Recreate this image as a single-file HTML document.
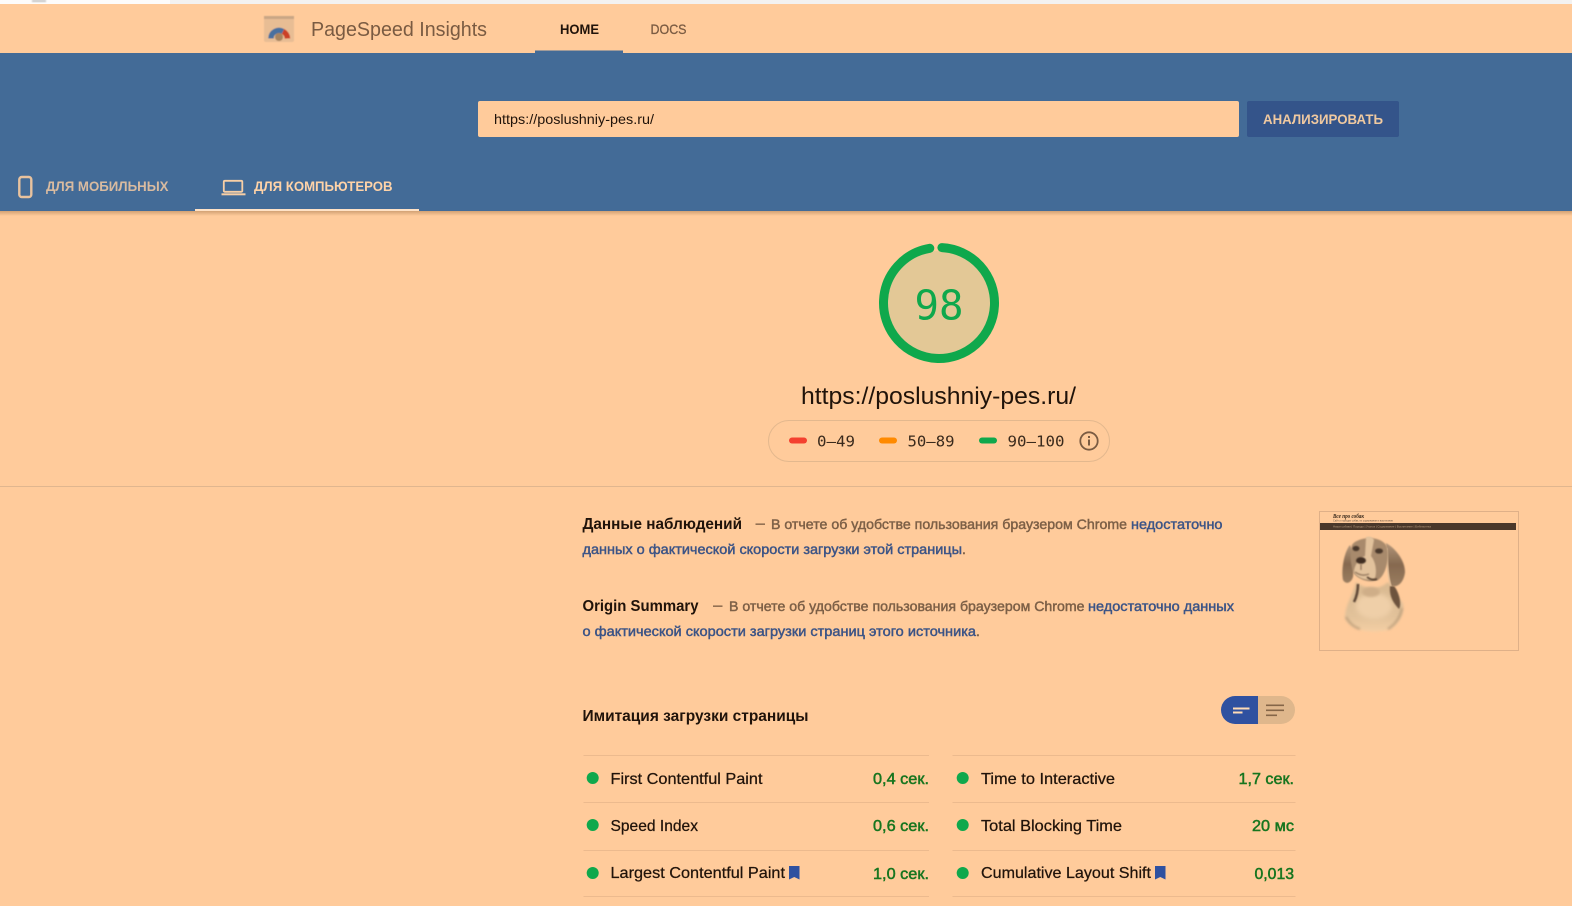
<!DOCTYPE html>
<html lang="ru">
<head>
<meta charset="utf-8">
<title>PageSpeed Insights</title>
<style>
html,body{margin:0;padding:0;background:#ffcb9b;width:1572px;height:906px;overflow:hidden}
svg{display:block}
text{font-family:"Liberation Sans",sans-serif;white-space:pre}
.b{font-weight:700}
.m{font-family:"DejaVu Sans Mono","Liberation Mono",monospace}
</style>
</head>
<body>
<svg xmlns="http://www.w3.org/2000/svg" width="1572" height="906" viewBox="0 0 1572 906">
<defs>
<filter id="s1" x="-50%" y="-50%" width="200%" height="200%"><feGaussianBlur stdDeviation="1.200"/></filter>
<filter id="s2" x="-50%" y="-50%" width="200%" height="200%"><feGaussianBlur stdDeviation="2.500"/></filter>
<filter id="s05" x="-50%" y="-50%" width="200%" height="200%"><feGaussianBlur stdDeviation="0.700"/></filter>
<filter id="sl" x="-20%" y="-20%" width="140%" height="140%"><feGaussianBlur stdDeviation="0.450"/></filter>
<linearGradient id="sh" x1="0" y1="0" x2="0" y2="1"><stop offset="0" stop-color="#d2a274"/><stop offset="1" stop-color="#ffcb9b"/></linearGradient>
<linearGradient id="ear" x1="0" y1="0" x2="0" y2="1"><stop offset="0" stop-color="#b2967a"/><stop offset=".5" stop-color="#86694f"/><stop offset="1" stop-color="#9a7d60"/></linearGradient>
<linearGradient id="chest" x1="0" y1="0" x2="0" y2="1"><stop offset="0" stop-color="#d8b890"/><stop offset=".7" stop-color="#e2c29a"/><stop offset="1" stop-color="#f4cfa4"/></linearGradient>
</defs>

<rect width="1572" height="906" fill="#ffcb9b"/>
<!-- top strip -->
<rect width="1572" height="4" fill="#f3f2f1"/>
<rect width="170" height="4" fill="#fdfcfb"/>
<rect x="32" y="0" width="14" height="2" fill="#c4c4c4" filter="url(#s05)"/>

<!-- header -->
<g filter="url(#sl)">
<rect x="264" y="16" width="30" height="26" rx="2" fill="#e8bd94"/>
<rect x="264" y="16" width="30" height="3" fill="#c9a685"/>
<path d="M271 38.500A8 8 0 0 1 283 31.500" fill="none" stroke="#48709f" stroke-width="5.500"/>
<path d="M283 31.500A8 8 0 0 1 287.500 38.500" fill="none" stroke="#cb3f28" stroke-width="5.500"/>
<circle cx="279" cy="37" r="4" fill="#a8845f"/>
</g>
<text x="311" y="36" font-size="20" fill="#7a5b42" textLength="176" lengthAdjust="spacingAndGlyphs">PageSpeed Insights</text>
<text x="560" y="34" font-size="14" class="b" fill="#20130a" textLength="39" lengthAdjust="spacingAndGlyphs">HOME</text>
<text x="650.500" y="34" font-size="14" fill="#7a5b42" stroke="#7a5b42" stroke-width="0.300" textLength="36" lengthAdjust="spacingAndGlyphs">DOCS</text>

<!-- blue band -->
<rect x="0" y="53" width="1572" height="158" fill="#436b97"/>
<rect x="0" y="211" width="1572" height="5" fill="url(#sh)"/>
<rect x="535" y="50.500" width="88" height="2.500" fill="#436b97"/>

<rect x="478" y="101" width="761" height="36" rx="2" fill="#ffcb9b"/>
<text x="494" y="124" font-size="14" fill="#20130a" textLength="160" lengthAdjust="spacingAndGlyphs">https://poslushniy-pes.ru/</text>
<rect x="1247" y="101" width="152" height="36" rx="2" fill="#34548a"/>
<text x="1263" y="124" font-size="14" class="b" fill="#f0c9a0" textLength="120" lengthAdjust="spacingAndGlyphs">АНАЛИЗИРОВАТЬ</text>

<!-- tabs -->
<rect x="19.300" y="177" width="12" height="20" rx="2.500" fill="none" stroke="#e8c29e" stroke-width="2.400"/>
<text x="46" y="191" font-size="14" class="b" fill="#d9bba0" textLength="122.500" lengthAdjust="spacingAndGlyphs">ДЛЯ МОБИЛЬНЫХ</text>
<rect x="223.800" y="180.800" width="18.500" height="11" rx="1" fill="none" stroke="#f8cfa6" stroke-width="1.800"/>
<rect x="221.500" y="193.300" width="24" height="2" fill="#f8cfa6"/>
<text x="254" y="191" font-size="14" class="b" fill="#ffd3a8" textLength="138.500" lengthAdjust="spacingAndGlyphs">ДЛЯ КОМПЬЮТЕРОВ</text>
<rect x="195" y="209" width="224" height="2" fill="#ffe2c6"/>

<!-- gauge -->
<circle cx="939" cy="303" r="52" fill="#e3c896"/>
<circle cx="939" cy="303" r="55.500" fill="none" stroke="#0fa84c" stroke-width="9" stroke-linecap="round" stroke-dasharray="336.200 400" transform="rotate(-87 939 303)"/>
<text x="914.500" y="319.500" class="m" font-size="41" fill="#0fa84c" textLength="49" lengthAdjust="spacingAndGlyphs">98</text>
<text x="801" y="404" font-size="24" fill="#20130a" textLength="275" lengthAdjust="spacingAndGlyphs">https://poslushniy-pes.ru/</text>

<!-- legend -->
<rect x="768.500" y="420.500" width="341" height="41" rx="20.500" fill="none" stroke="#e3b88e"/>
<rect x="789" y="437.500" width="18" height="6" rx="3" fill="#f4402f"/>
<text x="817" y="446.500" class="m" font-size="15" fill="#3a2a1c" textLength="38" lengthAdjust="spacingAndGlyphs">0–49</text>
<rect x="879" y="437.500" width="18" height="6" rx="3" fill="#ff8a00"/>
<text x="907.500" y="446.500" class="m" font-size="15" fill="#3a2a1c" textLength="47" lengthAdjust="spacingAndGlyphs">50–89</text>
<rect x="979" y="437.500" width="18" height="6" rx="3" fill="#0fa84c"/>
<text x="1007.500" y="446.500" class="m" font-size="15" fill="#3a2a1c" textLength="57" lengthAdjust="spacingAndGlyphs">90–100</text>
<circle cx="1089" cy="441" r="8.700" fill="none" stroke="#7a5b42" stroke-width="1.800"/>
<rect x="1088" y="439.500" width="2" height="6" fill="#7a5b42"/>
<rect x="1088" y="436" width="2" height="2" fill="#7a5b42"/>

<rect x="0" y="486" width="1572" height="1" fill="#e0b68f"/>

<!-- field data -->
<text x="582.500" y="529" font-size="16" class="b" fill="#20130a" textLength="159.500" lengthAdjust="spacingAndGlyphs">Данные наблюдений</text>
<rect x="755.500" y="523.500" width="9.500" height="1.300" fill="#7a5b42"/>
<g font-size="14" fill="#7d6047" stroke="#7d6047" stroke-width="0.450">
<text x="771" y="529" textLength="356" lengthAdjust="spacingAndGlyphs">В отчете об удобстве пользования браузером Chrome</text>
<text x="729" y="611" textLength="355.500" lengthAdjust="spacingAndGlyphs">В отчете об удобстве пользования браузером Chrome</text>
<text x="962" y="554">.</text>
<text x="976" y="636">.</text>
</g>
<g font-size="14" fill="#3c5486" stroke="#3c5486" stroke-width="0.450">
<text x="1131" y="529" textLength="91.500" lengthAdjust="spacingAndGlyphs">недостаточно</text>
<text x="582.500" y="554" textLength="379.500" lengthAdjust="spacingAndGlyphs">данных о фактической скорости загрузки этой страницы</text>
<text x="1088" y="611" textLength="146" lengthAdjust="spacingAndGlyphs">недостаточно данных</text>
<text x="582.500" y="636" textLength="393.500" lengthAdjust="spacingAndGlyphs">о фактической скорости загрузки страниц этого источника</text>
</g>
<text x="582.500" y="611" font-size="16" class="b" fill="#20130a" textLength="116" lengthAdjust="spacingAndGlyphs">Origin Summary</text>
<rect x="713" y="605.500" width="9.500" height="1.300" fill="#7a5b42"/>

<!-- thumbnail -->
<rect x="1319.500" y="511.500" width="199" height="139" fill="none" stroke="#dfb088"/>
<rect x="1320" y="523" width="196" height="7" fill="#4a382b"/>
<text x="1333" y="518" font-size="6.500" class="b" font-style="italic" style="font-family:'Liberation Serif',serif" fill="#3a2a1c" textLength="31" lengthAdjust="spacingAndGlyphs">Все про собак</text>
<text x="1333" y="521.500" font-size="2.500" fill="#6a5442" textLength="60" lengthAdjust="spacingAndGlyphs">Сайт о породах собак, их содержании и воспитании</text>
<text x="1333" y="527.500" font-size="2.800" fill="#b89c7e" textLength="98" lengthAdjust="spacingAndGlyphs">Наши собаки | Породы | Уголок | Содержание | Воспитание | Библиотека</text>
<!-- dog -->
<g>
<!-- chest -->
<path d="M1356 582C1352 598 1345 605 1345 618C1350 630 1370 634 1388 630C1400 625 1404 612 1403 604C1396 594 1395 590 1388 582C1380 590 1365 590 1356 582Z" fill="url(#chest)" filter="url(#s1)"/>
<ellipse cx="1374" cy="606" rx="18" ry="13" fill="#efcfa8" filter="url(#s2)"/>
<path d="M1346 617C1350 624 1354 627 1360 629M1402 608C1401 616 1396 624 1388 629" stroke="#a88c6c" stroke-width="2" fill="none" opacity=".7" filter="url(#s1)"/>
<path d="M1358 584C1358 590 1357 596 1354 602" stroke="#5b4534" stroke-width="2.500" fill="none" filter="url(#s05)"/>
<path d="M1390 586C1389 594 1392 602 1399 609C1402 604 1399 592 1394 586Z" fill="#6d523d" filter="url(#s05)"/>
<ellipse cx="1371" cy="592" rx="9" ry="5" fill="#cfae88" filter="url(#s1)"/>
<!-- ears -->
<path d="M1350 545C1344 552 1341 570 1343 580C1346 585 1351 583 1353 577L1355 555Z" fill="url(#ear)" filter="url(#s05)"/>
<path d="M1386 543C1395 548 1405 560 1405 572C1404 582 1398 588 1391 586C1388 575 1387 558 1386 543Z" fill="url(#ear)" filter="url(#s05)"/>
<path d="M1387 548C1388 562 1387 574 1391 586" stroke="#e8c9a4" stroke-width="1" fill="none" filter="url(#sl)"/>
<!-- head -->
<path d="M1352 545C1356 538 1378 534 1386 545C1390 555 1387 574 1378 580C1368 584 1356 578 1353 572C1350 562 1350 552 1352 545Z" fill="#a88a6c" filter="url(#s05)"/>
<path d="M1366 537C1370 536 1373 537 1374 540L1371 556C1376 562 1377 572 1375 578C1368 582 1357 578 1354 572C1354 566 1359 558 1365 556Z" fill="#e2c29c" filter="url(#s05)"/>
<ellipse cx="1356" cy="548.500" rx="3.500" ry="2.600" fill="#4a382a" filter="url(#s05)"/>
<ellipse cx="1379" cy="551" rx="4" ry="2.600" fill="#4a382a" filter="url(#s05)"/>
<ellipse cx="1361" cy="560.500" rx="5" ry="3.400" fill="#3f2e22" filter="url(#s05)"/>
<path d="M1361 564V570M1355 572Q1362 577 1369 574" stroke="#8a6e54" stroke-width="1.200" fill="none" filter="url(#s05)"/>
<path d="M1367 577Q1372 581 1377 579" stroke="#4a3626" stroke-width="1.500" fill="none" filter="url(#s05)"/>
</g>

<!-- simulated section -->
<text x="582.500" y="721" font-size="16" class="b" fill="#20130a" textLength="226" lengthAdjust="spacingAndGlyphs">Имитация загрузки страницы</text>
<path d="M1258 696h-23a14 14 0 0 0 0 28h23z" fill="#2f51a0"/>
<path d="M1258 696h23a14 14 0 0 1 0 28h-23z" fill="#dfb78c"/>
<rect x="1233" y="707.500" width="16.500" height="2" fill="#ffdcb6"/>
<rect x="1233" y="711.500" width="9.500" height="2" fill="#ffdcb6"/>
<rect x="1266" y="704.500" width="18" height="1.600" fill="#856648"/>
<rect x="1266" y="709.500" width="18" height="1.600" fill="#856648"/>
<rect x="1266" y="714.500" width="11" height="1.600" fill="#856648"/>

<g fill="#ecba8e">
<rect x="583.500" y="755" width="345.500" height="1"/><rect x="952.500" y="755" width="343" height="1"/>
<rect x="583.500" y="802" width="345.500" height="1"/><rect x="952.500" y="802" width="343" height="1"/>
<rect x="583.500" y="850" width="345.500" height="1"/><rect x="952.500" y="850" width="343" height="1"/>
<rect x="583.500" y="896" width="345.500" height="1"/><rect x="952.500" y="896" width="343" height="1"/>
</g>
<g fill="#0fa84c">
<circle cx="592.700" cy="778" r="6"/><circle cx="592.700" cy="825" r="6"/><circle cx="592.700" cy="873" r="6"/>
<circle cx="962.700" cy="778" r="6"/><circle cx="962.700" cy="825" r="6"/><circle cx="962.700" cy="873" r="6"/>
</g>
<g font-size="16" fill="#20130a" stroke="#20130a" stroke-width="0.250">
<text x="610.500" y="784" textLength="152" lengthAdjust="spacingAndGlyphs">First Contentful Paint</text>
<text x="610.500" y="831" textLength="87.500" lengthAdjust="spacingAndGlyphs">Speed Index</text>
<text x="610.500" y="878" textLength="174.500" lengthAdjust="spacingAndGlyphs">Largest Contentful Paint</text>
<text x="981" y="784" textLength="134" lengthAdjust="spacingAndGlyphs">Time to Interactive</text>
<text x="981" y="831" textLength="141" lengthAdjust="spacingAndGlyphs">Total Blocking Time</text>
<text x="981" y="878" textLength="170" lengthAdjust="spacingAndGlyphs">Cumulative Layout Shift</text>
</g>
<g font-size="16" fill="#17751f" stroke="#17751f" stroke-width="0.500">
<text x="873" y="784" textLength="56" lengthAdjust="spacingAndGlyphs">0,4 сек.</text>
<text x="873" y="831" textLength="56" lengthAdjust="spacingAndGlyphs">0,6 сек.</text>
<text x="873" y="879" textLength="56" lengthAdjust="spacingAndGlyphs">1,0 сек.</text>
<text x="1238.500" y="784" textLength="55.500" lengthAdjust="spacingAndGlyphs">1,7 сек.</text>
<text x="1252" y="831" textLength="42" lengthAdjust="spacingAndGlyphs">20 мс</text>
<text x="1254.500" y="879" textLength="39.500" lengthAdjust="spacingAndGlyphs">0,013</text>
</g>
<path d="M789 866h10.500v13.500l-5.250-2.500-5.250 2.500z" fill="#2f51a0"/>
<path d="M1155 866h10.500v13.500l-5.250-2.500-5.250 2.500z" fill="#2f51a0"/>
</svg>
</body>
</html>
